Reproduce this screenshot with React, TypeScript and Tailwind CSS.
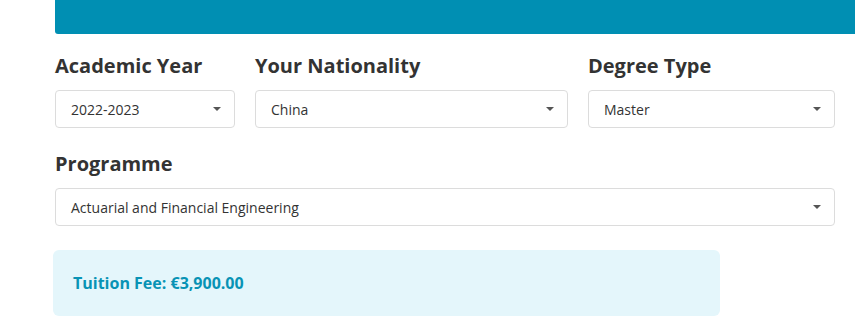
export default function App() {
  const font = { fontFamily: '"Open Sans", "Noto Sans", sans-serif' };

  const Caret = () => (
    <svg width="8" height="4" viewBox="0 0 8 4" className="shrink-0">
      <path d="M0 0 L8 0 L4 4 Z" fill="#555" />
    </svg>
  );

  const Select = ({ value }: { value: string }) => (
    <div className="flex h-[38px] items-center justify-between rounded border border-[#dcdcdc] bg-white pl-[15px] pr-[13px] text-[14px] text-[#333]">
      <span>{value}</span>
      <Caret />
    </div>
  );

  const Label = ({ children }: { children: string }) => (
    <div className="mb-[10px] h-7 text-[20px] font-bold leading-7 text-[#333]">{children}</div>
  );

  return (
    <div className="h-[335px] w-[855px] overflow-hidden bg-white" style={font}>
      <div className="ml-[55px] h-[34px] rounded-bl-[3px] bg-[#008fb3]" />

      <div className="ml-[55px] w-[780px] pt-[18px]">
        <div className="grid grid-cols-[180px_313px_247px] gap-x-[20px]">
          <div>
            <Label>Academic Year</Label>
            <Select value="2022-2023" />
          </div>
          <div>
            <Label>Your Nationality</Label>
            <Select value="China" />
          </div>
          <div>
            <Label>Degree Type</Label>
            <Select value="Master" />
          </div>
        </div>

        <div className="mt-[22px]">
          <Label>Programme</Label>
          <Select value="Actuarial and Financial Engineering" />
        </div>
      </div>

      <div className="ml-[53px] mt-[24px] flex h-[66px] w-[667px] items-center rounded-md bg-[#e4f6fb] px-5">
        <span className="text-[16px] font-bold text-[#0893b5]">Tuition Fee: €3,900.00</span>
      </div>
    </div>
  );
}
